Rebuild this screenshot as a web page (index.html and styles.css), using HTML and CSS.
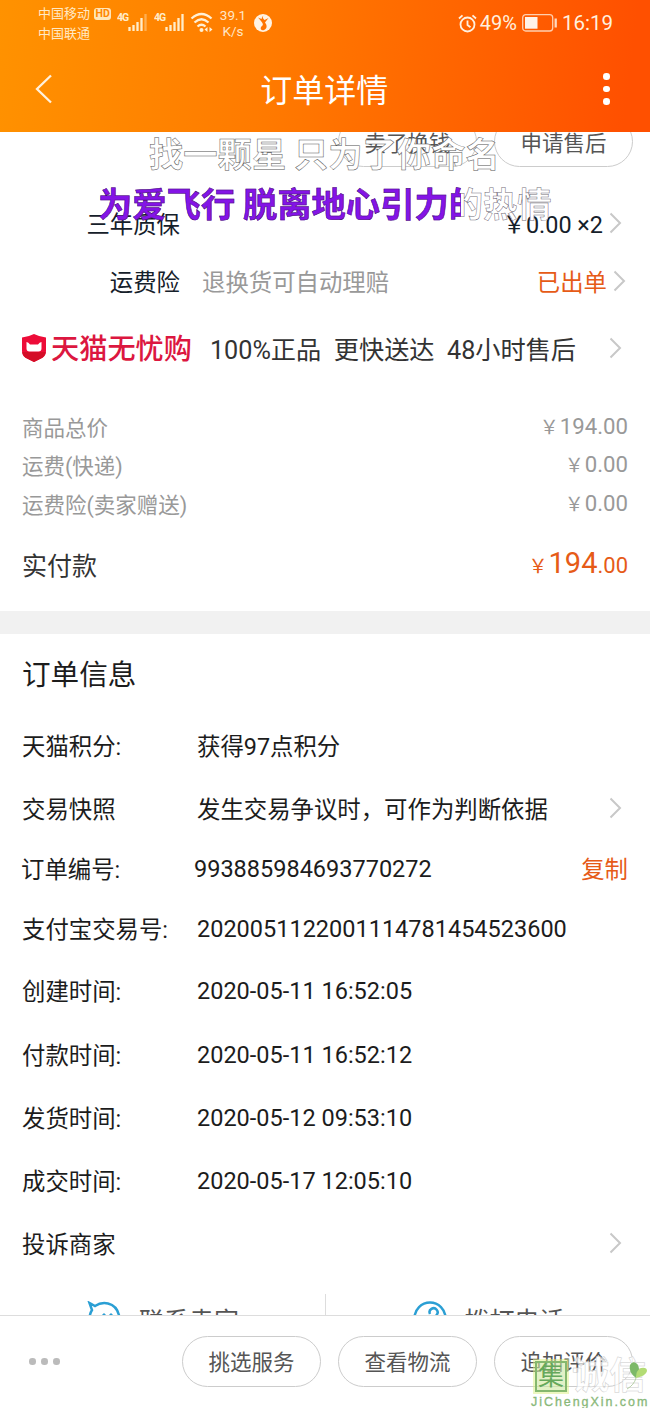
FILE: index.html
```html
<!DOCTYPE html>
<html lang="zh-CN">
<head>
<meta charset="utf-8">
<title>订单详情</title>
<link rel="stylesheet" href="styles.css">
</head>
<body>
<div class="screen">
  <header class="header">
    <div class="status">
      <div class="carriers"><div class="carrier">中国移动<span class="hd">HD</span></div><div class="carrier">中国联通</div></div>
      <svg class="signal" width="30" height="24" viewBox="0 0 30 24"><text x="0" y="11" class="net">4G</text><path d="M12.500 21v-4M16.500 21v-6M20.500 21V12M24.500 21V8" class="bar"/><path d="M28.500 21V4" class="bar dim"/></svg>
      <svg class="signal second" width="32" height="24" viewBox="0 0 32 24"><text x="0" y="11" class="net">4G</text><path d="M12.500 21v-4M16.500 21v-6M20.500 21V12M24.500 21V8M28.500 21V4" class="bar"/></svg>
      <svg class="wifi" width="24" height="22" viewBox="0 0 24 22"><path d="M1.500 7.500Q11.500-1.500 21.500 7.500M4.500 11.500Q11.500 5 18.500 11.500M7.500 15.500Q11.500 12 15.500 15.500" fill="none" stroke="#fff0d5" stroke-width="2.300"/><circle cx="11.500" cy="19" r="2" fill="#fff0d5"/><path d="M17.500 16v5l-3-2.500zM19.500 16v5l3-2.500z" fill="#fff0d5"/></svg>
      <div class="speed"><span>39.1</span><span>K/s</span></div>
      <svg class="app" width="18" height="18" viewBox="0 0 18 18"><circle cx="9" cy="9" r="9" fill="#fff3e4"/><path d="M10.500 1C8 2.500 8.500 4 10.500 6l4-2-3.500 4.500c2.500 3 2 6.500-1 7.500-3.500 1-4.500-2.500-1.500-4.500C10 10 7 7 4 3.500l3.500 1.500Q7.500 2.500 10.500 1z" fill="#ff7400"/></svg>
      <div class="status-right">
        <svg width="19" height="19" viewBox="0 0 19 19" fill="none" stroke="#fff0df" stroke-width="1.800"><circle cx="9.500" cy="10.500" r="7"/><path d="M9.500 6.500v4.500l3 2.200M1 4.500L4.500 1.300M18 4.500L14.500 1.300"/></svg>
        <span class="pct">49%</span>
        <svg class="battery" width="36" height="18" viewBox="0 0 36 18"><rect x=".7" y=".7" width="30" height="16.300" rx="3" fill="none" stroke="#ffcfae" stroke-width="1.300"/><rect x="3" y="3" width="12.500" height="11.700" fill="#fff3e8"/><path d="M33.700 4.500v9" stroke="#ffd9bf" stroke-width="2.300"/></svg>
        <span class="clock">16:19</span>
      </div>
    </div>
    <div class="nav">
      <svg class="back" width="18" height="30" viewBox="0 0 18 30"><path d="M16 1.500L2 15l14 13.500" fill="none" stroke="#fff1dc" stroke-width="2.300"/></svg>
      <h1 class="title">订单详情</h1>
      <div class="kebab"><i></i><i></i><i></i></div>
    </div>
  </header>

  <main class="content">
    <div class="item-actions"><span class="pill">卖了换钱</span><span class="pill">申请售后</span></div>
    <div class="row warranty"><span class="lead">三年质保</span><span class="end">￥0.00 ×2</span><svg class="chev" viewBox="0 0 13 22"><path d="M1.500 1.500L11 11l-9.500 9.500"/></svg></div>
    <div class="row insure"><span class="lead">运费险</span><span class="hint">退换货可自动理赔</span><span class="end orange">已出单</span><svg class="chev" viewBox="0 0 13 22"><path d="M1.500 1.500L11 11l-9.500 9.500"/></svg></div>
    <div class="row tmall">
      <svg class="shield" width="26" height="28" viewBox="0 0 26 28"><path d="M13 0q6 3 12 3.500V17q0 6-6 8l-6 3-6-3q-6-2-6-8V3.500Q7 3 13 0z" fill="#ed0c38"/><path d="M1.200 18h23.600q-.8 5-5.800 7l-6 3-6-3q-5-2-5.800-7z" fill="#d40d27"/><path d="M5.500 8q2 0 3.500 2.500h8Q18.500 8 20.500 8v6.500q0 3-3 3h-9q-3 0-3-3z" fill="#fff"/></svg>
      <span class="brand">天猫无忧购</span>
      <span class="perks"><span>100%正品</span><span>更快送达</span><span>48小时售后</span></span>
      <svg class="chev" viewBox="0 0 13 22"><path d="M1.500 1.500L11 11l-9.500 9.500"/></svg>
    </div>
    <div class="costs">
      <div class="cost"><span>商品总价</span><span class="amount"><span class="yen">￥</span>194.00</span></div>
      <div class="cost"><span>运费(快递)</span><span class="amount"><span class="yen">￥</span>0.00</span></div>
      <div class="cost"><span>运费险(卖家赠送)</span><span class="amount"><span class="yen">￥</span>0.00</span></div>
    </div>
    <div class="paid"><span>实付款</span><span class="total"><span class="yen">￥</span><b>194</b>.00</span></div>
    <div class="divider"></div>
    <h2 class="heading">订单信息</h2>
    <div class="info">
      <div class="field"><span class="label">天猫积分:</span><span>获得97点积分</span></div>
      <div class="field"><span class="label">交易快照</span><span>发生交易争议时，可作为判断依据</span><svg class="chev" viewBox="0 0 13 22"><path d="M1.500 1.500L11 11l-9.500 9.500"/></svg></div>
      <div class="field number"><span class="label">订单编号:</span><span class="digits">993885984693770272</span><span class="copy">复制</span></div>
      <div class="field alipay"><span class="label">支付宝交易号:</span><span class="digits">2020051122001114781454523600</span></div>
      <div class="field"><span class="label">创建时间:</span><span class="digits">2020-05-11 16:52:05</span></div>
      <div class="field"><span class="label">付款时间:</span><span class="digits">2020-05-11 16:52:12</span></div>
      <div class="field"><span class="label">发货时间:</span><span class="digits">2020-05-12 09:53:10</span></div>
      <div class="field"><span class="label">成交时间:</span><span class="digits">2020-05-17 12:05:10</span></div>
      <div class="field"><span class="label">投诉商家</span><svg class="chev" viewBox="0 0 13 22"><path d="M1.500 1.500L11 11l-9.500 9.500"/></svg></div>
    </div>
    <div class="contacts">
      <div class="contact"><svg width="34" height="34" viewBox="0 0 34 34" fill="none" stroke="#2b9fd4" stroke-width="2.500"><path d="M2.500 17Q3 12 5 9L2.500 2l5.500 3Q14 1 21 2.500 31 5 32.500 17 32 30 17 32 4 30 2.500 17"/><path d="M15 15l2-2 2 2M22 15l2-2 2 2" stroke-width="1.500"/></svg><span>联系卖家</span></div>
      <div class="contact"><svg width="34" height="34" viewBox="0 0 34 34" fill="none" stroke="#2b9fd4" stroke-width="2.500"><circle cx="17" cy="17" r="15.500"/><path d="M17 13a4 4 0 1 1 6.500 1q-2 8-10 10"/></svg><span>拨打电话</span></div>
    </div>
  </main>

  <footer class="footer">
    <div class="more"><i></i><i></i><i></i></div>
    <div class="buttons"><span class="pill">挑选服务</span><span class="pill">查看物流</span><span class="pill">追加评价</span></div>
  </footer>

  <div class="lyric first">找一颗星 只为了你命名</div>
  <div class="lyric current">为爱飞行 脱离地心引力的热情</div>

  <div class="watermark">
    <div class="mark"><span class="seal">集</span><span class="name">诚信</span></div>
    <svg class="leaf" width="24" height="29" viewBox="0 0 24 29"><path d="M11 17Q3 11 5 4q2-4 6-2 3 2 3 7z" fill="#7cb968"/><path d="M11 17q0-8 5-10 6-1 6 3-1 5-11 7z" fill="#b3dc75"/><path d="M11 17q-2 7-9 11" fill="none" stroke="#b5cfa5"/></svg>
    <div class="site">JiChengXin.com</div>
  </div>
</div>
</body>
</html>
```
FILE: styles.css
```css
* { box-sizing: border-box; }
body { margin: 0; background: #fff; font-family: Roboto, "Noto Sans CJK SC", sans-serif; color: #1c1c1c; }
.screen { position: relative; width: 650px; height: 1408px; display: flex; flex-direction: column; overflow: hidden; white-space: nowrap; }
h1, h2 { margin: 0; font-weight: 400; }

.header { flex: none; height: 132px; background: linear-gradient(97deg, #ff9200 0%, #ff7a00 42%, #ff5000 96%); color: #fff; }
.status { height: 46px; display: flex; align-items: flex-start; padding-left: 38px; color: #fff0df; }
.carriers { width: 79px; padding-top: 4px; font-size: 13px; line-height: 20px; color: #ffe9c4; }
.carrier { display: flex; align-items: center; }
.hd { margin-left: 4px; padding: 0 1.500px; border-radius: 3px; background: #ffe6b8; color: #ff8600; font-size: 10.500px; line-height: 12px; font-weight: 700; }
.signal { margin-top: 10px; }
.second { margin-left: 7px; }
.net { font-size: 10.500px; font-weight: 700; fill: #ffedca; letter-spacing: -1px; }
.bar { stroke: #ffedca; stroke-width: 2.300; }
.dim { opacity: .4; }
.wifi { margin: 11px 0 0 4px; }
.speed { width: 38px; padding-top: 7px; display: flex; flex-direction: column; align-items: center; font-size: 13.500px; line-height: 16px; color: #ffe6c6; }
.app { margin: 14px 0 0 2px; }
.status-right { margin-left: auto; margin-right: 37px; padding-top: 11px; height: 35px; display: flex; align-items: center; }
.pct { margin-left: 3px; font-size: 20px; }
.battery { margin-left: 5px; }
.clock { margin-left: 4px; font-size: 20.500px; }
.nav { height: 86px; display: flex; align-items: center; justify-content: space-between; padding: 0 40px 0 35px; }
.title { font-size: 32px; line-height: 40px; margin-top: 3px; margin-right: 8px; }
.kebab { display: flex; flex-direction: column; gap: 6px; }
.kebab i { width: 6.500px; height: 6.500px; border-radius: 50%; background: #fff; }

.content { height: 1183px; overflow: hidden; }
.pill { width: 139px; height: 51px; padding-bottom: 2px; border: 1px solid #ccc; border-radius: 26px; display: flex; align-items: center; justify-content: center; font-size: 21.500px; color: #555; }
.item-actions { margin-top: -16px; height: 51px; display: flex; justify-content: flex-end; gap: 17px; padding-right: 17px; }
.item-actions .pill { padding-bottom: 0; }
.row { display: flex; align-items: center; padding-right: 28px; font-size: 23.400px; color: #15202a; }
.chev { flex: none; width: 13px; height: 22px; margin-left: auto; fill: none; stroke: #c8c8c8; stroke-width: 2; }
.lead { width: 180px; text-align: right; }
.end { margin-left: auto; }
.end + .chev { margin-left: 6px; }
.warranty { height: 58px; margin-top: 27px; }
.insure { height: 58px; padding-right: 24px; }
.hint { margin-left: 22px; color: #999; }
.orange { color: #e65b17; }
.tmall { height: 76px; padding-left: 21px; }
.brand { margin: -4px 0 0 4px; font-size: 28.200px; font-weight: 500; color: #dc1740; }
.perks { display: flex; gap: 12.500px; margin: -1px 0 0 18px; font-size: 25.200px; color: #333; }
.costs { margin-top: 21px; font-size: 21.500px; color: #999; }
.cost { height: 38.500px; display: flex; align-items: center; justify-content: space-between; padding: 0 22px; }
.amount { margin-top: -2px; font-size: 22.200px; }
.yen { font-size: 19px; margin-right: 1px; }
.paid { height: 50px; margin-top: 16px; display: flex; align-items: center; justify-content: space-between; padding: 0 22px; font-size: 25px; color: #333; }
.total { margin-top: -1px; font-size: 22px; color: #e65b17; }
.total b { font-size: 29px; font-weight: 400; }
.divider { height: 23px; margin-top: 22px; background: #f1f1f1; }
.heading { height: 80px; padding: 0 22px; font-size: 28.600px; line-height: 83px; }
.field { height: 63.200px; display: flex; align-items: center; padding: 0 28px 0 22px; font-size: 23.400px; }
.label { flex: none; width: 175px; }
.digits { padding-top: 2px; font-size: 23.500px; }
.number { height: 58px; padding: 0 22px 2px 21px; }
.number .label { width: 173px; }
.alipay { height: 61px; padding-bottom: 1px; }
.copy { margin-left: auto; color: #e65b17; }
.contacts { display: flex; margin-top: 19px; height: 60px; }
.contact { flex: 1; display: flex; align-items: flex-start; padding: 7px 0 0 87px; font-size: 25px; line-height: 36px; color: #555; }
.contact + .contact { border-left: 1px solid #ddd; }
.contact span { margin-left: 18px; margin-top: 3px; }

.footer { height: 93px; border-top: 1px solid #ddd; background: #fff; display: flex; align-items: center; justify-content: space-between; padding: 0 17px 1px 29px; }
.more { display: flex; gap: 5.500px; }
.more i { width: 6.500px; height: 6.500px; border-radius: 50%; background: #bbb; }
.buttons { display: flex; gap: 17px; }

/* Floating lyrics drawn over the page */
.lyric { position: absolute; font-family: "Noto Sans CJK SC", sans-serif; font-size: 34.300px; line-height: 50px; font-weight: 700; color: #fff; -webkit-text-stroke: .5px #555; }
.first { left: 149px; top: 127px; }
.current { left: 98px; top: 177px; color: transparent; -webkit-text-stroke-color: rgba(30, 20, 50, .7); background: linear-gradient(90deg, #8414e6 363px, #fff 363px); -webkit-background-clip: text; background-clip: text; }

/* Site watermark */
.watermark { position: absolute; left: 531px; top: 1361px; width: 119px; }
.mark { display: flex; align-items: center; gap: 5px; padding-left: 4px; }
.seal { width: 32px; height: 31px; border: 2px solid #85b86e; outline: 2px solid rgba(220, 240, 130, .5); background: rgba(205, 232, 160, .6); font-size: 26px; line-height: 26px; text-align: center; color: #65a85b; }
.name { font-size: 37px; line-height: 31px; font-weight: 700; color: rgba(255, 255, 255, .7); -webkit-text-stroke: .5px #ccc; }
.leaf { position: absolute; left: 94px; top: 0; }
.site { margin-top: 3px; font-family: "Liberation Sans", sans-serif; font-size: 12.500px; line-height: 15px; letter-spacing: 1.950px; color: #89b879; -webkit-text-stroke: .3px #89b879; }
```
